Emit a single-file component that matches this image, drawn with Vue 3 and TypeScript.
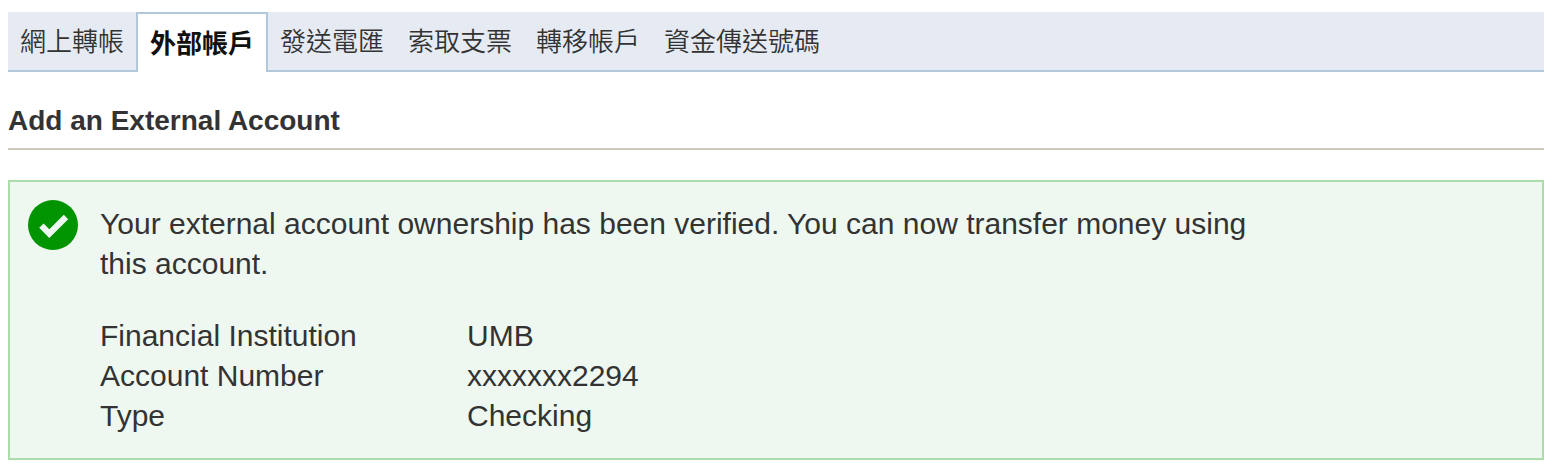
<script setup lang="ts">
import { ref } from 'vue'

interface Tab {
  id: string
  label: string
}

interface Detail {
  label: string
  value: string
}

const tabs: Tab[] = [
  { id: 'online', label: '網上轉帳' },
  { id: 'external', label: '外部帳戶' },
  { id: 'wire', label: '發送電匯' },
  { id: 'check', label: '索取支票' },
  { id: 'move', label: '轉移帳戶' },
  { id: 'routing', label: '資金傳送號碼' },
]

const activeTab = ref<string>('external')

const details: Detail[] = [
  { label: 'Financial Institution', value: 'UMB' },
  { label: 'Account Number', value: 'xxxxxxx2294' },
  { label: 'Type', value: 'Checking' },
]
</script>

<template>
  <div class="page">
    <nav class="tabs">
      <a
        v-for="tab in tabs"
        :key="tab.id"
        href="#"
        class="tab"
        :class="{ active: tab.id === activeTab }"
        :aria-current="tab.id === activeTab ? 'page' : undefined"
        lang="zh-Hant"
        @click.prevent="activeTab = tab.id"
      >{{ tab.label }}</a>
    </nav>

    <main>
      <h1 class="title">Add an External Account</h1>

      <section class="notice" role="status">
        <svg class="icon" viewBox="0 0 50 50" aria-hidden="true">
          <circle cx="25" cy="25" r="25" fill="#009400" />
          <path d="M13.4 25.6 L21.3 33.7 L38 17" fill="none" stroke="#eef8f1" stroke-width="6.2" />
        </svg>
        <div class="body">
          <p class="message">
            Your external account ownership has been verified. You can now transfer money using this account.
          </p>
          <table class="details">
            <tbody>
              <tr v-for="item in details" :key="item.label">
                <th scope="row">{{ item.label }}</th>
                <td>{{ item.value }}</td>
              </tr>
            </tbody>
          </table>
        </div>
      </section>
    </main>
  </div>
</template>

<style>
body {
  margin: 0;
  background: #fff;
}
</style>

<style scoped>
.page {
  padding: 12px 8px 6px;
  color: #333;
  font-family: Arial, "Liberation Sans", "Noto Sans CJK TC", sans-serif;
}

.tabs {
  display: flex;
  background: linear-gradient(#b0c8d9, #b0c8d9) bottom / 100% 2px no-repeat #e6ebf3;
}

.tab {
  padding: 10px 12px;
  color: #333;
  font-size: 26px;
  font-weight: 350;
  line-height: 40px;
  text-decoration: none;
}

.tab.active {
  padding-bottom: 8px;
  border: 2px solid #b0c8d9;
  border-bottom: 0;
  background: #fff;
  color: #111;
  font-weight: 700;
}

.title {
  margin: 32px 0 30px;
  padding-bottom: 10px;
  border-bottom: 2px solid #cec8be;
  font-size: 28px;
  font-weight: 700;
  line-height: 34px;
}

.notice {
  display: flex;
  align-items: flex-start;
  gap: 22px;
  padding: 18px;
  border: 2px solid #abdda9;
  background: #eef8f1;
  font-size: 30px;
  line-height: 40px;
}

.icon {
  flex: none;
  width: 50px;
  height: 50px;
}

.body {
  flex: 1;
  padding: 4px 0;
}

.message {
  max-width: 82%;
  margin: 0 0 32px;
}

.details {
  border-collapse: collapse;
}

.details th,
.details td {
  padding: 0;
  font-weight: 400;
  text-align: left;
}

.details th {
  width: 367px;
}
</style>
